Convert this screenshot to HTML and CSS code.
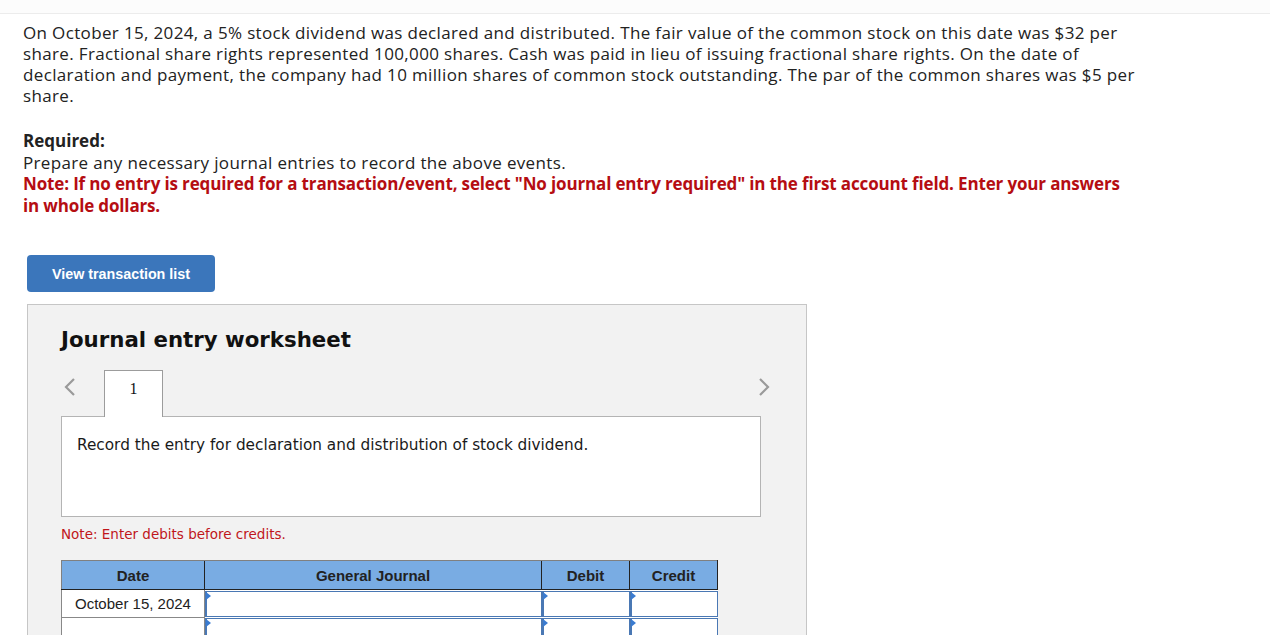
FILE: index.html
```html
<!DOCTYPE html>
<html lang="en">
<head>
    <meta charset="UTF-8">
    <title>Journal entry worksheet</title>
    <link rel="stylesheet" href="styles.css">
</head>
<body>
    <div class="topbar"></div>
    <div class="content">
        <p class="question">On October 15, 2024, a 5% stock dividend was declared and distributed. The fair value of the common stock on this date was $32 per share. Fractional share rights represented 100,000 shares. Cash was paid in lieu of issuing fractional share rights. On the date of declaration and payment, the company had 10 million shares of common stock outstanding. The par of the common shares was $5 per share.</p>

        <div class="required">
            <strong>Required:</strong><br>
            Prepare any necessary journal entries to record the above events.<br>
            <span class="note">Note: If no entry is required for a transaction/event, select "No journal entry required" in the first account field. Enter your answers in whole dollars.</span>
        </div>

        <button class="btn-view">View transaction list</button>

        <div class="worksheet">
            <h2 class="ws-title">Journal entry worksheet</h2>

            <div class="ws-nav">
                <svg class="chev prev" width="14" height="20" viewBox="0 0 14 20"><path d="M11 2 L3 10 L11 18" fill="none" stroke="#9a9a9a" stroke-width="2.2"/></svg>
                <div class="tab">1</div>
                <svg class="chev next" width="14" height="20" viewBox="0 0 14 20"><path d="M3 2 L11 10 L3 18" fill="none" stroke="#9a9a9a" stroke-width="2.2"/></svg>
            </div>

            <div class="desc">Record the entry for declaration and distribution of stock dividend.</div>

            <p class="ws-note">Note: Enter debits before credits.</p>

            <table class="journal">
                <thead>
                    <tr>
                        <th class="c-date">Date</th>
                        <th class="c-acct">General Journal</th>
                        <th class="c-amt">Debit</th>
                        <th class="c-amt">Credit</th>
                    </tr>
                </thead>
                <tbody>
                    <tr>
                        <td class="date">October 15, 2024</td>
                        <td class="field"><div class="inp"></div></td>
                        <td class="field"><div class="inp"></div></td>
                        <td class="field"><div class="inp"></div></td>
                    </tr>
                    <tr>
                        <td class="date"></td>
                        <td class="field"><div class="inp"></div></td>
                        <td class="field"><div class="inp"></div></td>
                        <td class="field"><div class="inp"></div></td>
                    </tr>
                </tbody>
            </table>
        </div>
    </div>
</body>
</html>
```

FILE: styles.css
```css
body {
    margin: 0;
    background: #fff;
    font-family: "Open Sans", "Liberation Sans", sans-serif;
    color: #222;
}

.topbar {
    height: 13px;
    background: #fcfcfc;
    border-bottom: 1px solid #ececec;
}

.content {
    padding-left: 23px;
}

.question {
    margin: 8px 0 0;
    width: 1118px;
    font-size: 17px;
    letter-spacing: 0.35px;
    line-height: 21px;
}

.required {
    margin-top: 24px;
    width: 1106px;
    font-size: 17px;
    letter-spacing: 0.35px;
    line-height: 21.5px;
}

.required strong {
    font-weight: bold;
    letter-spacing: 0;
}

.note {
    color: #b50d12;
    font-weight: bold;
    letter-spacing: -0.15px;
}

.btn-view {
    display: block;
    margin: 39px 0 0 4px;
    width: 188px;
    height: 37px;
    border: none;
    border-radius: 4px;
    background: #3b76bb;
    color: #fff;
    font-family: "Liberation Sans", Arial, sans-serif;
    font-weight: bold;
    font-size: 14.3px;
    cursor: pointer;
}

.worksheet {
    margin: 12px 0 0 4px;
    width: 780px;
    height: 345px;
    background: #f2f2f2;
    border: 1px solid #c6c6c6;
    padding: 22px 0 0 33px;
    box-sizing: border-box;
}

.ws-title {
    margin: 0;
    font-family: "DejaVu Sans", Verdana, sans-serif;
    font-weight: bold;
    font-size: 21.3px;
    line-height: 26px;
    color: #111;
}

.ws-nav {
    display: flex;
    align-items: center;
    width: 710px;
    margin-top: 17px;
    height: 47px;
    position: relative;
    z-index: 1;
}

.chev.prev {
    margin: 7px 27px 0 2px;
    align-self: flex-start;
}

.chev.next {
    margin: 7px 0 0 auto;
    align-self: flex-start;
}

.tab {
    width: 59px;
    height: 47px;
    background: #fff;
    border: 1px solid #9c9c9c;
    border-bottom: none;
    box-sizing: border-box;
    text-align: center;
    font-family: "Liberation Serif", "Times New Roman", serif;
    font-size: 16px;
    padding-top: 9px;
    color: #111;
}

.desc {
    width: 700px;
    height: 101px;
    margin-top: -1px;
    box-sizing: border-box;
    background: #fff;
    border: 1px solid #b4b4b4;
    padding: 19px 0 0 15px;
    font-family: "DejaVu Sans", Verdana, sans-serif;
    font-size: 15.3px;
    color: #1a1a1a;
}

.ws-note {
    margin: 9px 0 0;
    font-family: "DejaVu Sans", Verdana, sans-serif;
    font-size: 13.5px;
    color: #c0161b;
}

.journal {
    margin-top: 18px;
    border-collapse: collapse;
    font-family: "Liberation Sans", Arial, sans-serif;
    font-size: 15px;
}

.journal th {
    height: 28px;
    padding: 0;
    background: #79ace3;
    color: #222;
    font-weight: bold;
    border-top: 1px solid #808080;
    border-left: 1px solid #222;
    border-bottom: 1px solid #222;
}

.journal th:first-child {
    border-left-color: #808080;
}

.journal th:last-child {
    border-right: 1px solid #222;
}

.c-date { width: 142px; }
.c-acct { width: 336px; }
.c-amt { width: 87px; }

.journal td {
    padding: 0;
    height: 26px;
    background: #fff;
}

.journal td.date {
    text-align: center;
    border: 1px solid #888;
    color: #222;
}

.journal td.field {
    padding: 1px 0 0 0;
    vertical-align: top;
}

.inp {
    position: relative;
    height: 26px;
    border: 1.5px solid #4a78b4;
    border-left-width: 2px;
    box-sizing: border-box;
    background: #fff;
}

.inp::before {
    content: "";
    position: absolute;
    left: -1px;
    top: 0;
    border-left: 5px solid #3a7bd0;
    border-top: 4px solid transparent;
    border-bottom: 4px solid transparent;
}
```
